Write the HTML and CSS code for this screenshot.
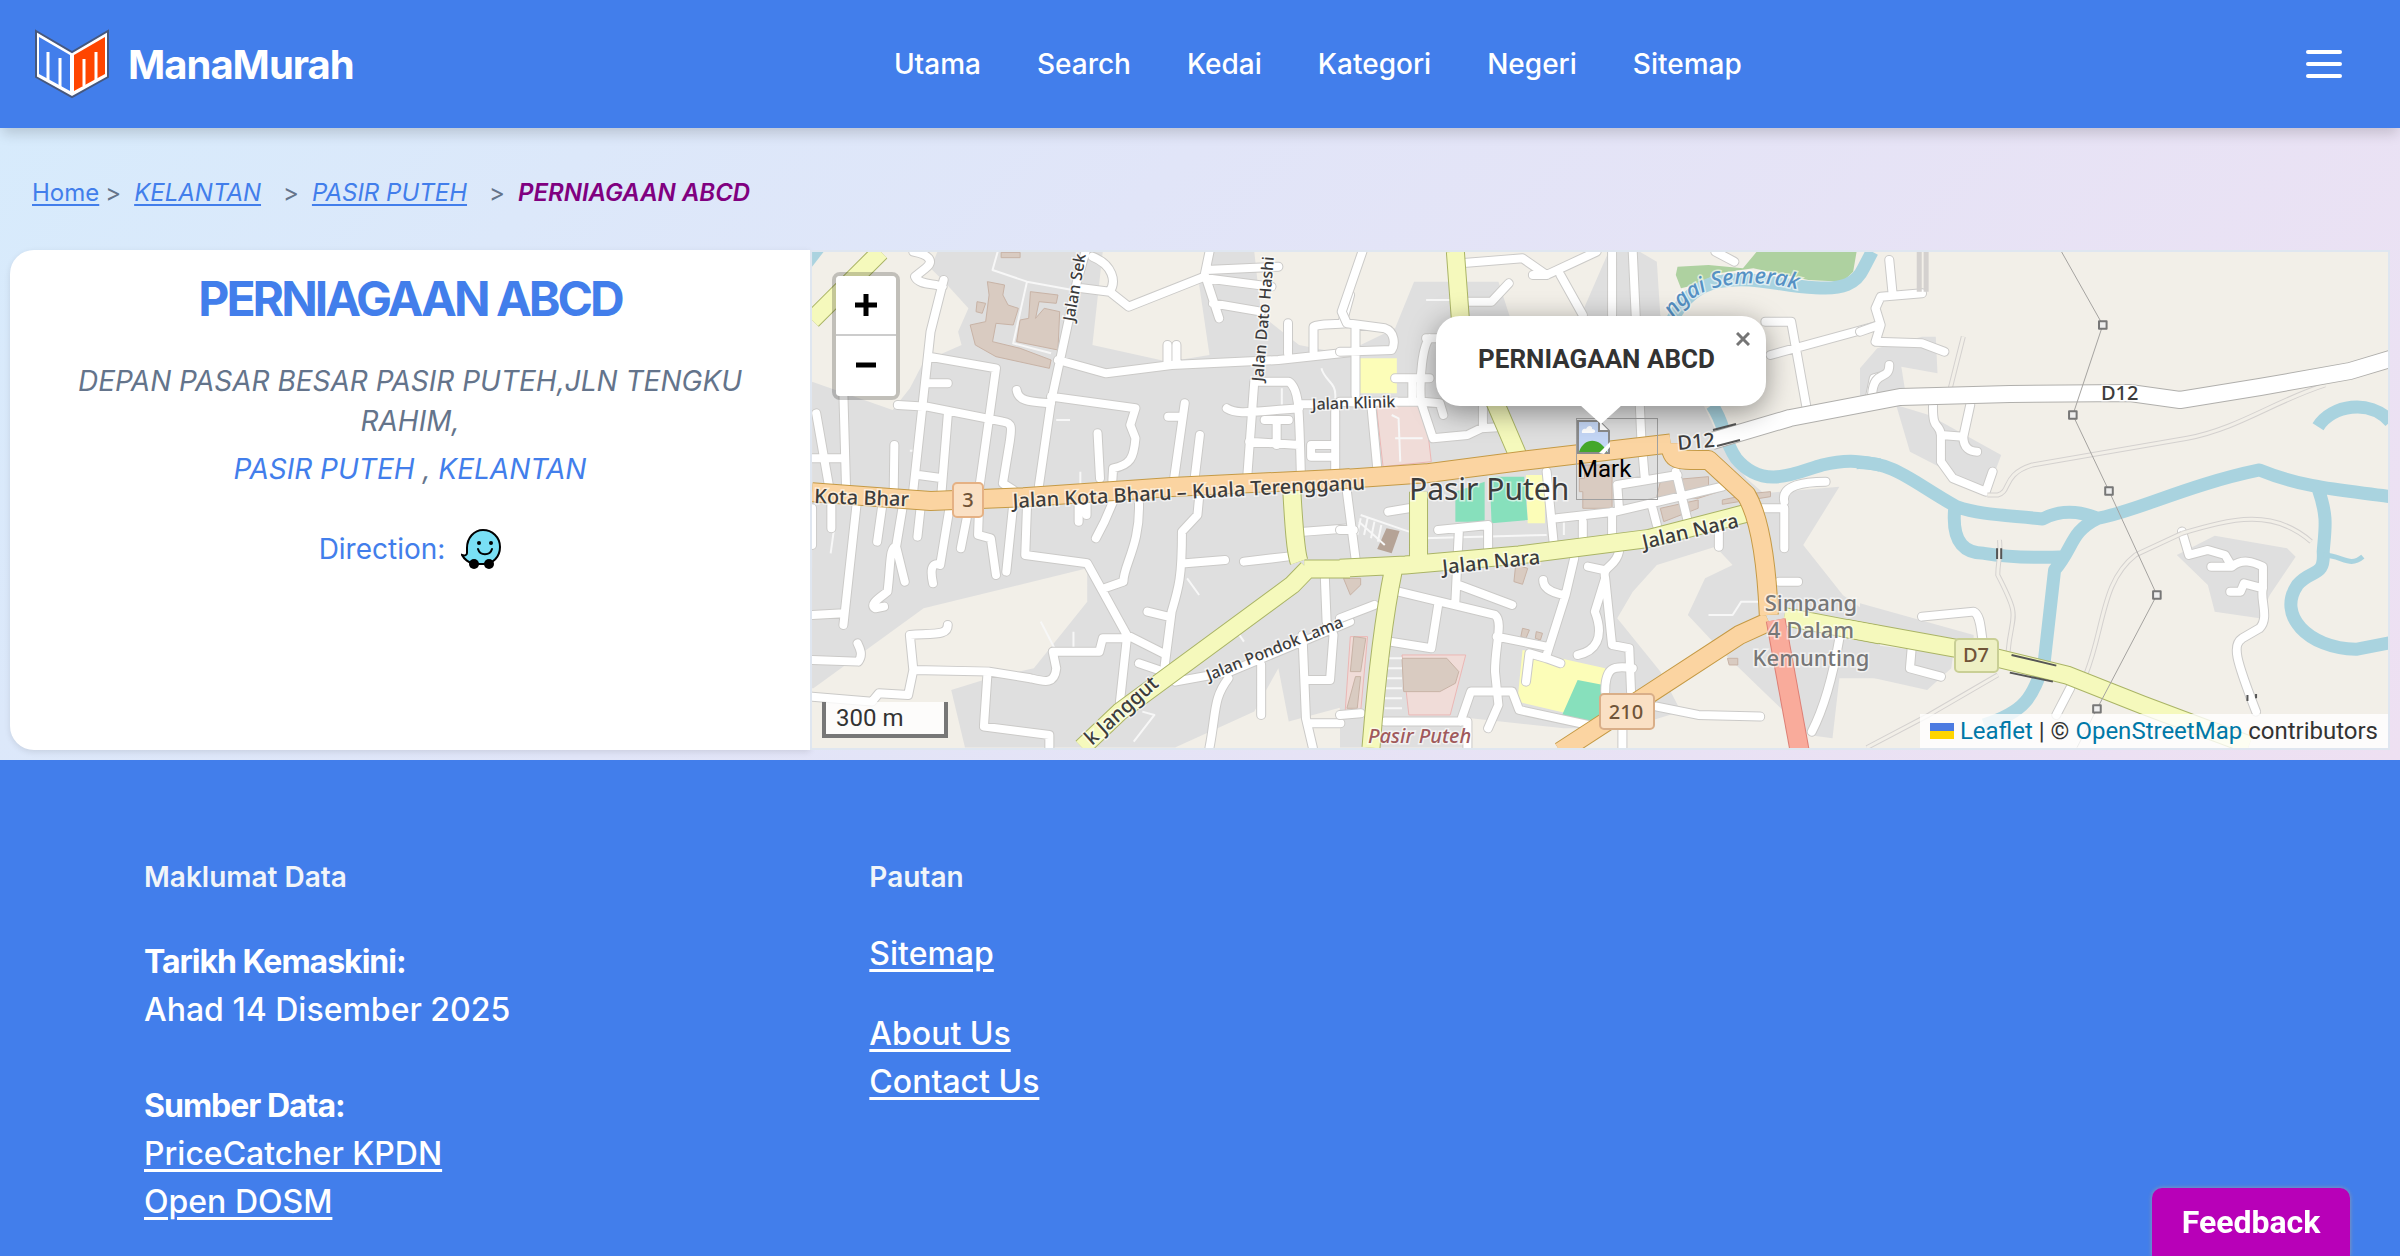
FILE: index.html
```html
<!DOCTYPE html>
<html lang="ms">
<head>
<meta charset="utf-8">
<title>PERNIAGAAN ABCD - ManaMurah</title>
<meta name="viewport" content="width=device-width, initial-scale=1">
<link rel="stylesheet" href="styles.css">
</head>
<body>
<header class="site-header">
  <a class="brand" href="#">
    <svg class="brand-logo" viewBox="0 0 76 70" aria-hidden="true">
      <path d="M2 2 38 23 74 2V48L38 68 2 48Z" fill="#fff" stroke="#46587e" stroke-width="2"/>
      <path d="M5 8 36 26V62L5 45Z" fill="#427eeb"/>
      <path d="M40 26 71 8V45L40 62Z" fill="#ff4500"/>
      <path d="M14 23V51M26 29V58M50 30V57M62 23V51" stroke="#fff" stroke-width="3"/>
    </svg>
    <span class="brand-name">ManaMurah</span>
  </a>
  <nav class="main-nav">
    <a href="#">Utama</a><a href="#">Search</a><a href="#">Kedai</a><a href="#">Kategori</a><a href="#">Negeri</a><a href="#">Sitemap</a>
  </nav>
  <button class="menu-button" type="button" aria-label="Menu"><span></span><span></span><span></span></button>
</header>

<main>
  <nav class="breadcrumb" aria-label="Breadcrumb">
    <a href="#">Home</a><span class="sep sep-first">&gt;</span>
    <a class="slanted" href="#">KELANTAN</a><span class="sep">&gt;</span>
    <a class="slanted" href="#">PASIR PUTEH</a><span class="sep">&gt;</span>
    <strong>PERNIAGAAN ABCD</strong>
  </nav>

  <section class="shop">
    <article class="shop-card">
      <h1>PERNIAGAAN ABCD</h1>
      <address>
        <p class="street-name">DEPAN PASAR BESAR PASIR PUTEH,JLN TENGKU RAHIM,</p>
        <p class="area"><a href="#">PASIR PUTEH</a> , <a href="#">KELANTAN</a></p>
      </address>
      <a class="direction" href="#">Direction:
        <svg class="waze" viewBox="0 0 40 40" aria-hidden="true">
          <path d="M6 24V19C6 9 13 1 22 1S39 8 39 18 32 35 22 35H13C8 34 3 30 1 26 4 27 6 26 6 24Z" fill="#79e0f5" stroke="#000" stroke-width="2"/>
          <circle cx="13" cy="35" r="5"/><circle cx="28" cy="35" r="5"/>
          <circle cx="18" cy="14" r="2"/><circle cx="30" cy="14" r="2"/>
          <path d="M17 20C19 27 29 27 31 20" fill="none" stroke="#000" stroke-width="2" stroke-linecap="round"/>
        </svg>
      </a>
    </article>

    <div class="map">
      <svg class="map-tiles" viewBox="812 252 1576 496" preserveAspectRatio="xMidYMid slice" role="img" aria-label="Peta Pasir Puteh">
        <defs>
          <path id="roads-west" d="M300 20C350 30 360 50 335 70L305 95C315 120 360 115 385 125M388 105L350 260 300 735M345 335L540 370 520 520M345 415H400M255 480L340 485 560 530C590 535 585 550 580 590L560 715 590 735M400 510L382 740M315 690L385 700M520 520L490 740M800 20L775 110 700 470 665 720M820 35C880 60 890 110 870 140L790 130M870 140L925 185 1145 95 1160 20M1150 75L1360 65M1150 100L1340 125M1150 100L1188 220M1170 175L1310 200M720 345L860 385 1050 360 1360 345 1568 322M1038 300V350M1064 300V350M600 435C605 470 640 470 700 475M700 455L945 490 930 540 945 580C940 640 930 660 880 670L878 705M1088 475L1058 695M1040 515H1080M1132 570L1118 690M835 565L842 700M1290 410L1270 690M1290 410H1390C1420 430 1420 480 1425 680M1420 478H1460M1210 490C1240 510 1280 500 1420 490M1320 525H1390M1355 530V600M1275 590L1420 600M1388 235V325M1462 320V245C1480 235 1510 240 1560 235M1548 225L1568 150M1525 500V680M1525 600H1455V635H1525M97 450L105 740M18 505L58 740M6 640H100M245 600L243 740M6 790V900M62 780V850M135 780L97 1140M6 1110L97 1105M210 780L195 890M270 780L250 905 275 1010M250 905C230 905 235 960 225 1040 200 1060 170 1080 190 1090L215 1085M322 780L312 875M405 790L378 960C350 950 350 980 357 1015M455 820L438 910M490 810L488 870 525 880 540 990M590 780L570 980M630 785L625 930 805 955 920 1170 1025 1225M955 770C960 900 910 960 910 1010L855 1030M880 770L855 830 830 880M780 760V830M803 760V810M1130 755L1125 810 1080 860C1080 1000 1070 1030 1050 1100L1030 1260M1090 955L1205 945M1260 950L1385 935M980 1100L1040 1115M920 1180L900 1370M920 1180H850L840 1220H705L715 1270C710 1320 680 1310 640 1300L520 1280 300 1275M400 1140C400 1170 370 1165 290 1170L300 1275 285 1350 200 1345 180 1370 6 1355M515 1290L505 1445 695 1470V1508M6 1245L140 1250C155 1230 145 1210 138 1195M955 1255L1040 1285 1060 1310 1220 1280 1568 1130M1495 1000L1500 1130 1520 1170 1510 1305H1440M1430 1170L1440 1420 1460 1508M1450 1435H1540M1310 1260V1410M1215 1300C1170 1360 1180 1400 1160 1508M1435 860L1568 850"/>
          <path id="roads-centre" d="M65 20L5 200 20 235 130 250C160 260 160 300 150 315L0 320M45 250V450M350 55L530 40 600 90 745 20M640 90L705 210M790 20V210M850 20L875 580M1090 20L1145 50M370 170H440L490 115M260 280C240 300 230 400 235 470L0 470M160 400H260M210 400V470M235 470L270 580 370 570 410 550 480 545M240 470L290 475 300 510M415 480V550M90 470L110 690M0 470 90 475M250 280H310M1235 230H1310L1355 490M1250 330L1568 240M560 90L600 90M600 680L620 890M630 820L800 800 1110 725M805 720L810 790M805 720L980 690M875 580L885 700M975 680L1010 830M905 780L920 840M705 830V880M790 800V880M140 800L200 790M285 855L430 840V910M345 860L335 1070M20 740L45 940M0 855H40M0 1120L100 1080M170 1040L450 1110C475 1130 450 1200 450 1280L460 1380 430 1450M345 1020L500 1080M285 1080L265 1210 145 1190M455 1175L600 1205M680 940L655 1050 600 1230M650 1050C600 1040 590 1020 590 1005M810 920C800 970 760 960 770 1000L740 1100C770 1180 740 1220 690 1230M720 965L765 975M770 1000L790 1200 840 1210 845 1340M820 1450V1508M600 1240L550 1225 540 1310M600 1240L640 1255M770 1340C770 1270 790 1260 850 1270M350 1430L380 1340H500L520 1395 720 1440M130 1430H370V1508M0 1410 60 1405M920 1385L1040 1410 1220 1415M1100 860V905M1225 790H1290V910M1290 770C1280 720 1350 710 1410 710M1275 1010H1330M1450 1180C1430 1300 1400 1400 1370 1460M1540 450 1550 400 1568 395"/>
          <path id="roads-east" d="M85 45L95 150M180 145L60 155 45 190 60 240 45 290 180 295 245 320M0 260 55 240M85 360C85 410 40 370 35 450M212 480C210 560 230 530 235 570V650L270 700 365 740 385 680M235 570L300 575 320 480M300 575C300 610 320 620 340 620M935 860L955 930 1010 915 1060 930 1080 965H1020M1080 965C1110 940 1140 950 1170 965V1030C1160 1060 1190 1120 1160 1150L1110 1180C1080 1200 1090 1240 1150 1400M1170 1030L1115 1015 1105 1040H1075M180 1115 330 1100C350 1110 350 1150 355 1180M150 1210 145 1270 235 1295M610 1330 570 1410"/>
          <path id="yellow-west" d="M6 225 205 20M1398 720C1405 850 1410 920 1420 950M1435 972H1568M790 1508 900 1400 1400 1020 1445 972"/>
          <path id="yellow-centre" d="M335 20 350 230 520 640M0 970 190 960 520 930 900 880 1180 805M228 740 228 960M155 975C130 1100 110 1250 90 1508"/>
          <path id="yellow-d7" d="M1290 1115 1568 1170"/>
          <path id="yellow-east" d="M-40 1150 280 1210 600 1290 820 1380 1130 1500"/>
          <path id="orange-west" d="M6 742 350 768 620 757 1050 726 1568 700"/>
          <path id="orange-centre" d="M0 703 250 685 550 645 960 595M960 595C960 650 980 645 1070 645L1180 750C1225 830 1240 990 1245 1110M1245 1130 1160 1170 900 1345 640 1520"/>
          <path id="river-centre" d="M1080 480C1120 540 1110 580 1150 640 1230 740 1330 680 1400 660 1480 640 1510 650 1568 660"/>
          <path id="semerak" d="M1673 318C1693 292 1712 287 1738 284Q1772 281 1806 292"/>
        </defs>

        <rect x="800" y="240" width="1600" height="520" fill="#f2efe8"/>
        <!-- built-up land, parks and buildings -->
        <g transform="translate(810 245) scale(.3444 .3333)">
          <path class="built" d="M370 20H850L820 300 1040 350 1160 330 1130 120 1170 20H1290L1310 210 1420 300 1568 330V1380L1390 1430 1360 1270 1290 1400 1060 1508H450L410 1335 520 1300 650 1270 805 1070V970L330 1090 10 1330 6 1330V410L240 495 290 430 330 350 440 300 430 260 460 190 390 110 350 70Z"/>
          <path fill="#abd3df" d="M6 20H40L6 65Z"/>
          <path class="house" d="M515 110 565 120 560 150 575 180 605 190 590 240 540 235 530 290 610 310 700 345 695 370 540 335 480 300 465 240 510 230 520 150ZM485 170 510 175 500 205 482 200ZM640 140 720 150 715 175 665 170 655 220 680 190 725 200 720 315 600 290 610 225 635 220ZM555 22H610V38H555Z"/>
          <path class="footway" d="M545 20 530 75 630 110 790 140M630 110 590 295 700 325M600 500M715 525H755M290 617H320M785 680V760M670 1130 710 1210M765 1160V1210M1095 1000 1130 1050M1240 1160 1260 1190M940 1490 1000 1410 965 1400M1485 370C1495 410 1530 410 1525 460M70 850 60 925M1370 430V480"/>
          <path class="campus" d="M1545 1200H1568V1395H1540Z"/>
        </g>
        <g transform="translate(1340 245) scale(.3444 .3333)">
          <path class="built" d="M215 110H460L520 300 700 210 780 20H870L920 50 930 210 1060 490 1110 600 1180 700 1230 745 1450 725 1345 900 1460 1050 1568 1130V1300L1450 1300 1430 1480 1360 1470 1110 1220 1010 1110 1060 1000 1140 960 1090 905 920 960 850 1040 805 1120 930 1280 990 1400 830 1450 650 1450 380 1420 370 1508H0V330L160 250Z"/>
          <path fill="#aed1a0" d="M980 65 1070 60 1170 70 1210 20H1500L1490 80 1460 110 1360 105 1200 70 1100 85 1030 120 990 130 975 90Z"/>
          <path class="campus" d="M105 480 245 472 265 650 125 665ZM30 1175H80L60 1400H15ZM180 1230H365L320 1410H200Z"/>
          <path fill="#fcfdb8" d="M50 340H165V445H50ZM540 690H595V835H545ZM530 1215 770 1270 760 1430 515 1370Z"/>
          <path fill="#87e0bc" d="M335 740 420 710V830H335ZM435 695H535L545 825 440 835ZM690 1305 765 1320V1430H700L645 1410Z"/>
          <path class="house" d="M710 660H790V790H705V740H695V700H710ZM180 1240H310L345 1280 335 1315 290 1340H185ZM40 1175 75 1180 60 1280 30 1280ZM45 1295H60L50 1390H20ZM10 1000H60V1020L30 1050ZM510 960 545 970 530 1018 505 1010ZM930 710 960 705 1070 695V720L1100 740 1040 760 920 755ZM930 790 1040 765V790L940 830ZM1110 765 1200 745 1250 740V755L1110 778ZM530 1150 550 1155 540 1180 525 1175ZM570 1160 588 1165 582 1185 567 1180ZM1125 1240H1155V1260H1130Z"/>
          <path fill="#b5a396" d="M135 850 173 858 150 925 108 912Z"/>
          <path class="footway" d="M150 510 170 520 175 650M160 580H240M60 810 200 860M55 830 130 900M250 165H340M130 1240H180M130 1270H180M130 1300H180M130 1330H180M130 1360H180M130 1390H180M1070 1110H1140L1165 1070H1220M240 880 600 870M650 830V870M60 820 50 870M80 820 70 870M100 830 90 880M120 840 110 890"/>
        </g>
        <g transform="translate(1860 245) scale(.3444 .3333)">
          <path class="built" d="M0 370 50 310 180 275H220L225 385 120 365 130 430 100 450 0 470ZM105 480 200 510 410 630 370 740 220 660 145 620ZM920 930 1030 872 1240 910 1265 935 1190 1050 1160 1120 1030 1100 1010 1020ZM0 1075 330 1170V1210L0 1140ZM0 1195 270 1230 265 1270 195 1335 0 1290Z"/>
        </g>

        <!-- rivers -->
        <g transform="translate(1340 245) scale(.3444 .3333)">
          <use href="#river-centre" class="river"/>
          <path class="river" d="M965 225C1000 150 1050 120 1100 110 1200 90 1280 125 1380 128 1460 135 1500 115 1520 70L1545 20"/>
        </g>
        <g transform="translate(1860 245) scale(.3444 .3333)">
          <path class="river" d="M-10 653C100 650 150 710 280 785 350 810 420 810 530 822 570 800 620 790 690 820 800 800 950 720 1160 675 1290 730 1400 735 1540 755M275 790C265 900 310 925 360 925 420 935 500 940 600 935M690 820C610 860 620 910 565 975L535 1250C500 1360 480 1400 360 1440M1330 730C1360 820 1350 850 1345 920 1350 1000 1310 970 1270 1020 1210 1110 1300 1210 1440 1213L1540 1193M1330 545C1370 480 1480 460 1540 530"/>
          <path class="stream" d="M1345 930C1400 930 1420 970 1460 935"/>
        </g>

        <!-- residential streets -->
        <g transform="translate(810 245) scale(.3444 .3333)"><use href="#roads-west" class="street-case"/><use href="#roads-west" class="street"/></g>
        <g transform="translate(1340 245) scale(.3444 .3333)"><use href="#roads-centre" class="street-case"/><use href="#roads-centre" class="street"/></g>
        <g transform="translate(1860 245) scale(.3444 .3333)">
          <use href="#roads-east" class="street-case"/><use href="#roads-east" class="street"/>
          <path class="track-case" d="M300 275 262 430M1350 420C1200 470 1100 550 950 580L500 660C410 690 440 740 400 750H370M405 885C410 930 400 950 400 990 470 1130 440 1100 430 1220M935 865 800 930C700 1010 710 1150 655 1290M935 865C1080 820 1200 790 1310 890M400 1290 200 1410 20 1508M172 20V140M192 20V140"/>
          <path class="track" d="M300 275 262 430M1350 420C1200 470 1100 550 950 580L500 660C410 690 440 740 400 750H370M405 885C410 930 400 950 400 990 470 1130 440 1100 430 1220M935 865 800 930C700 1010 710 1150 655 1290M935 865C1080 820 1200 790 1310 890M400 1290 200 1410 20 1508"/>
        </g>

        <!-- D12 secondary road -->
        <path class="d12-case" d="M1712 441 1790 418 1900 397 2010 394 2130 393 2180 400 2260 387 2350 371 2400 356"/>
        <path class="d12" d="M1712 441 1790 418 1900 397 2010 394 2130 393 2180 400 2260 387 2350 371 2400 356"/>

        <!-- yellow, orange and red roads -->
        <g transform="translate(810 245) scale(.3444 .3333)"><use href="#yellow-west" class="yellow-case"/></g>
        <g transform="translate(1340 245) scale(.3444 .3333)"><use href="#yellow-centre" class="yellow-case"/><use href="#yellow-d7" class="yellow-case"/></g>
        <g transform="translate(1860 245) scale(.3444 .3333)"><use href="#yellow-east" class="yellow-case"/></g>
        <g transform="translate(810 245) scale(.3444 .3333)"><use href="#yellow-west" class="yellow"/><use href="#orange-west" class="orange-case"/></g>
        <g transform="translate(1340 245) scale(.3444 .3333)"><use href="#yellow-centre" class="yellow"/><use href="#yellow-d7" class="yellow"/><use href="#orange-centre" class="orange-case"/></g>
        <g transform="translate(1860 245) scale(.3444 .3333)"><use href="#yellow-east" class="yellow"/></g>
        <g transform="translate(810 245) scale(.3444 .3333)"><use href="#orange-west" class="orange"/></g>
        <g transform="translate(1340 245) scale(.3444 .3333)">
          <use href="#orange-centre" class="orange"/>
          <path class="red-case" d="M1265 1125 1335 1520"/><path class="red" d="M1265 1125 1335 1520"/>
        </g>

        <!-- power line -->
        <g transform="translate(1860 245) scale(.3444 .3333)">
          <path class="power" d="M585 20 705 240 618 510 723 738 862 1050 688 1392 630 1508"/>
          <path class="pylon" d="M694 229H716V251H694ZM607 499H629V521H607ZM712 727H734V749H712ZM851 1039H873V1061H851ZM677 1381H699V1403H677Z"/>
          <path class="bridge" d="M398 910V942M410 910V942M440 1230 570 1262M435 1283 560 1310M1125 1350V1368M1150 1347V1360"/>
        </g>
        <path class="bridge" d="M1713 430 1736 424M1717 446 1740 440"/>

        <!-- road shields -->
        <rect x="953" y="483" width="30" height="34" rx="4" fill="#fae0c4" stroke="#e5b184" stroke-width="2"/>
        <rect x="1600" y="694" width="54" height="35" rx="4" fill="#fae0c4" stroke="#d9ae88" stroke-width="2"/>
        <rect x="1955" y="639" width="43" height="33" rx="4" fill="#eef0c4" stroke="#c9cf95" stroke-width="2"/>
        <g class="shield">
          <text x="968" y="507">3</text><text x="1626" y="719">210</text><text x="1976" y="662">D7</text>
        </g>

        <!-- place and street names -->
        <g class="label">
          <text transform="translate(814 503) rotate(2)">Kota Bhar</text>
          <text transform="translate(1013 508) rotate(-3)">Jalan Kota Bharu – Kuala Terengganu</text>
          <text transform="translate(1443 574) rotate(-6)">Jalan Nara</text>
          <text transform="translate(1644 549) rotate(-13)">Jalan Nara</text>
          <text transform="translate(1092 746) rotate(-42)">k Janggut</text>
          <text transform="translate(1678 450) rotate(-5)">D12</text>
          <text x="2101" y="400">D12</text>
        </g>
        <g class="label label-small">
          <text transform="translate(1074 322) rotate(-80)">Jalan Sek</text>
          <text transform="translate(1263 382) rotate(-85)">Jalan Dato Hashi</text>
          <text transform="translate(1312 410) rotate(-2)">Jalan Klinik</text>
          <text transform="translate(1209 681) rotate(-22)">Jalan Pondok Lama</text>
        </g>
        <text class="label label-town" x="1409" y="500">Pasir Puteh</text>
        <g class="label label-suburb"><text x="1811" y="611">Simpang</text><text x="1811" y="638">4 Dalam</text><text x="1811" y="666">Kemunting</text></g>
        <text class="label label-school" x="1368" y="743">Pasir Puteh</text>
        <text class="label label-river"><textPath href="#semerak">ngai Semerak</textPath></text>
      </svg>

      <div class="marker">
        <svg class="broken-image" viewBox="0 0 34 34" aria-hidden="true">
          <path d="M1 1H22L32 11V33H1Z" fill="#c4d6f5" stroke="#8b8b8b" stroke-width="2"/>
          <path d="M5 13C4 9 8 8 9 9 11 4 16 6 15 9 19 9 19 13 16 13Z" fill="#fff"/>
          <path d="M2 32C7 17 23 17 30 32Z" fill="#43a72b"/>
          <path d="M22 1V11H32" fill="#fff" stroke="#8b8b8b" stroke-width="2"/>
          <path d="M22 33 33 22V27L27 34Z" fill="#fff"/>
        </svg>
        <span class="marker-alt">Mark</span>
      </div>
      <div class="popup">
        <strong>PERNIAGAAN ABCD</strong>
        <button class="popup-close" type="button" aria-label="Close popup"><svg viewBox="0 0 14 14"><path d="M1 1 13 13M13 1 1 13" stroke="#757575" stroke-width="3"/></svg></button>
      </div>
      <div class="zoom">
        <button type="button" aria-label="Zoom in"><svg viewBox="0 0 22 22"><path d="M0 11H22M11 0V22" stroke="#000" stroke-width="5"/></svg></button>
        <button type="button" aria-label="Zoom out"><svg viewBox="0 0 22 22"><path d="M1 10H21" stroke="#000" stroke-width="5"/></svg></button>
      </div>
      <div class="scale">300 m</div>
      <div class="attribution">
        <svg class="flag" viewBox="0 0 24 16" aria-hidden="true"><path fill="#4c7be1" d="M0 0H24V8H0Z"/><path fill="#ffd500" d="M0 8H24V16H0Z"/></svg>
        <a href="#">Leaflet</a> | © <a href="#">OpenStreetMap</a> contributors
      </div>
    </div>
  </section>
</main>

<footer class="site-footer">
  <section>
    <h2>Maklumat Data</h2>
    <div class="block"><h3>Tarikh Kemaskini:</h3><p>Ahad 14 Disember 2025</p></div>
    <div class="block"><h3>Sumber Data:</h3><a href="#">PriceCatcher KPDN</a><a href="#">Open DOSM</a></div>
  </section>
  <section>
    <h2>Pautan</h2>
    <div class="links"><a href="#">Sitemap</a></div>
    <div class="links"><a href="#">About Us</a><a href="#">Contact Us</a></div>
  </section>
</footer>
<button class="feedback" type="button">Feedback</button>
</body>
</html>
```
FILE: styles.css
```css
* { box-sizing: border-box; }
html { height: 100%; }
body {
  margin: 0;
  min-height: 100%;
  display: flex;
  flex-direction: column;
  overflow: hidden;
  font-family: Inter, "Liberation Sans", sans-serif;
  font-size: 28px;
  color: #64748b;
  background: #427eeb;
}
a { color: #427eeb; }
p, h1, h2, h3 { margin: 0; }
button { border: 0; padding: 0; cursor: pointer; }

.site-header {
  position: relative;
  display: flex;
  justify-content: space-between;
  align-items: center;
  height: 128px;
  padding: 0 34px;
  background: #427eeb;
  box-shadow: 0 8px 12px -2px rgba(0, 0, 0, .15);
}
.brand { display: flex; align-items: center; gap: 18px; color: #fff; text-decoration: none; }
.brand-logo { width: 76px; height: 70px; }
.brand-name { font-size: 40px; font-weight: 700; letter-spacing: -1px; }
.main-nav { display: flex; gap: 56px; }
.main-nav a { color: #fff; font-weight: 500; text-decoration: none; }
.menu-button { display: flex; flex-direction: column; gap: 8px; padding: 24px; background: none; }
.menu-button span { width: 36px; height: 4px; border-radius: 2px; background: #fff; }

main { padding-bottom: 10px; background: linear-gradient(135deg, #d7ebfc, #e1e5f8 40%, #eee0f2); }
.breadcrumb {
  display: flex;
  align-items: center;
  height: 122px;
  padding: 6px 32px 0;
  font-size: 24px;
}
.breadcrumb a { text-underline-offset: 3px; }
.breadcrumb .slanted, .breadcrumb strong { font-style: italic; }
.breadcrumb strong { color: #800080; font-weight: 600; }
.sep { margin: 0 13px 0 22px; }
.sep-first { margin-left: 6px; }

.shop { display: grid; grid-template-columns: 40fr 79fr; min-height: 500px; margin: 0 10px; }
.shop-card {
  padding: 19px 60px;
  background: #fff;
  border-radius: 24px 0 0 24px;
  box-shadow: 0 2px 6px rgba(0, 0, 0, .1);
  text-align: center;
}
.shop-card h1 { font-size: 48px; line-height: 60px; font-weight: 700; letter-spacing: -3px; color: #427eeb; }
address { margin-top: 32px; line-height: 40px; }
.area { margin-top: 8px; }
.area a, .direction { text-decoration: none; }
.direction { display: flex; justify-content: center; align-items: center; gap: 16px; margin-top: 40px; line-height: 40px; }
.waze { width: 40px; height: 40px; }

.map {
  position: relative;
  overflow: hidden;
  border: 2px solid #dfe6f0;
  font-family: Roboto, "Liberation Sans", sans-serif;
  font-size: 24px;
  color: #333;
}
.map-tiles { position: absolute; inset: 0; width: 100%; height: 100%; }
.map-tiles path, .map-tiles use { stroke-linejoin: round; vector-effect: non-scaling-stroke; }
.built { fill: #dfdfdf; }
.campus { fill: #f0dcd8; stroke: #ecb7b5; }
.house { fill: #d9cbc1; stroke: #c8b3a6; }
.footway { fill: none; stroke: #f7f7f7; stroke-width: 2; }
.river, .stream { fill: none; stroke: #a9d3df; stroke-width: 13; }
.stream { stroke-width: 5; }
.street-case, .street { fill: none; stroke: #cbcac8; stroke-width: 10; stroke-linecap: round; }
.street { stroke: #fff; stroke-width: 8; }
.track-case, .track { fill: none; stroke: #d4d1cf; stroke-width: 5; }
.track { stroke: #f2efe8; stroke-width: 3; }
.d12-case, .d12 { fill: none; stroke: #b0afac; stroke-width: 18; }
.d12 { stroke: #fff; stroke-width: 16; }
.yellow-case, .yellow { fill: none; stroke: #aab466; stroke-width: 19; }
.yellow { stroke: #f5f9bc; stroke-width: 17; }
.orange-case, .orange { fill: none; stroke: #c59a45; stroke-width: 20; }
.orange { stroke: #fbd4a1; stroke-width: 18; }
.red-case, .red { fill: none; stroke: #dd7f75; stroke-width: 20; }
.red { stroke: #f9ab9b; stroke-width: 18; }
.power { fill: none; stroke: #a5a3a0; stroke-width: 1; }
.pylon { fill: #eee; stroke: #777; stroke-width: 2; }
.bridge { fill: none; stroke: #555; stroke-width: 2; }
.label, .shield { font-family: "Noto Sans", sans-serif; font-size: 20px; font-weight: 500; fill: #3c3c3c; }
.label { paint-order: stroke; stroke: rgba(255, 255, 255, .6); stroke-width: 3px; }
.shield { text-anchor: middle; fill: #705438; }
.label-small text { font-size: 16px; }
.label-town { font-size: 30px; font-weight: 400; }
.label-suburb { font-size: 22px; fill: #777; text-anchor: middle; }
.label-school { fill: #a05a5c; font-style: italic; }
.label-river { font-size: 22px; font-style: italic; fill: #5591c4; }

.marker { position: absolute; left: 764px; top: 166px; width: 82px; height: 82px; border: 1px solid #a0a0a0; color: #000; }
.broken-image { display: block; width: 34px; height: 36px; }
.marker-alt { display: block; line-height: 28px; }
.popup {
  position: absolute;
  left: 624px;
  top: 64px;
  display: flex;
  align-items: center;
  width: 330px;
  height: 90px;
  padding: 0 42px 4px;
  border-radius: 24px;
  background: #fff;
  box-shadow: 0 6px 28px rgba(0, 0, 0, .4);
  font-size: 26px;
  white-space: nowrap;
}
.popup::after {
  content: "";
  position: absolute;
  left: 144px;
  top: 89px;
  border: 21px solid transparent;
  border-top: 19px solid #fff;
  border-bottom: 0;
}
.popup-close { position: absolute; right: 16px; top: 16px; width: 14px; height: 14px; background: none; line-height: 0; }
.zoom {
  position: absolute;
  left: 20px;
  top: 20px;
  width: 68px;
  border: 4px solid rgba(0, 0, 0, .2);
  border-radius: 8px;
  background-clip: padding-box;
}
.zoom button { display: grid; place-items: center; width: 60px; height: 60px; background: #fff; border-radius: 0 0 4px 4px; }
.zoom button:first-child { border-bottom: 2px solid #ccc; border-radius: 4px 4px 0 0; }
.zoom svg { width: 22px; height: 22px; }
.scale {
  position: absolute;
  left: 10px;
  bottom: 10px;
  width: 126px;
  padding: 0 10px;
  border: 4px solid #777;
  border-top: 0;
  background: rgba(255, 255, 255, .8);
  line-height: 32px;
}
.attribution { position: absolute; right: 0; bottom: 0; padding: 0 10px; background: rgba(255, 255, 255, .8); line-height: 34px; white-space: nowrap; }
.attribution a { color: #0078a8; text-decoration: none; }
.flag { width: 24px; height: 16px; }

.site-footer {
  flex: 1;
  display: grid;
  grid-template-columns: 1fr 1fr 1fr;
  padding: 97px 80px 0 144px;
  background: #427eeb;
  color: #fff;
  font-size: 32px;
  font-weight: 500;
  line-height: 48px;
}
.site-footer h2 { font-size: 28px; line-height: 40px; font-weight: 600; color: #f1f5f9; }
.site-footer h3 { font-size: 32px; font-weight: 700; letter-spacing: -1px; }
.site-footer a { color: #fff; display: table; text-underline-offset: 4px; }
.block { margin-bottom: 48px; }
h2 + .block { margin-top: 41px; }
.links { margin-top: 32px; }
h2 + .links { margin-top: 33px; }
.feedback {
  position: fixed;
  right: 50px;
  bottom: 0;
  width: 198px;
  height: 68px;
  border-radius: 10px 10px 0 0;
  background: #b800b8;
  box-shadow: 0 0 4px rgba(160, 160, 160, .9);
  color: #fff;
  font: 700 32px Roboto, sans-serif;
}
```
